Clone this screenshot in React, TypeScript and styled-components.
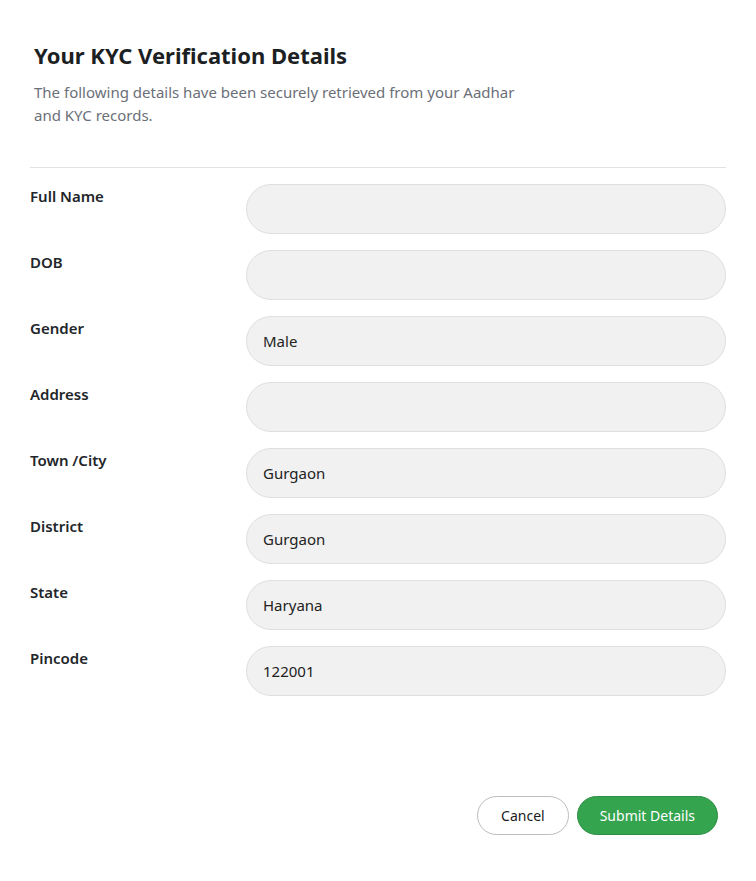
import React from 'react';
import styled, { createGlobalStyle } from 'styled-components';

const GlobalStyle = createGlobalStyle`
    body {
        margin: 0;
        background: #ffffff;
        font-family: "Noto Sans", "Open Sans", sans-serif;
        color: #1f2328;
    }
`;

const Page = styled.div`
    display: flex;
    flex-direction: column;
    padding: 40px 30px 0;
`;

// <HEADER>
const Header = styled.div`
    padding: 0 4px 40px;
    border-bottom: 1px solid #e2e2e2;
`;

const Title = styled.h1`
    margin: 0 0 11px;
    font-size: 22px;
    line-height: 30px;
    font-weight: 700;
    color: #1c1f23;
`;

const Subtitle = styled.p`
    margin: 0;
    width: 490px;
    font-size: 15px;
    line-height: 23px;
    color: #6b7078;
`;
// </HEADER>

// <FIELDS>
const Fields = styled.div`
    display: flex;
    flex-direction: column;
    gap: 16px;
    padding-top: 16px;
`;

const Row = styled.div`
    display: grid;
    grid-template-columns: 216px 480px;
    align-items: start;
`;

const Label = styled.label`
    padding-top: 2px;
    font-size: 15px;
    line-height: 20px;
    font-weight: 600;
    color: #22262a;
`;

const Field = styled.input`
    box-sizing: border-box;
    width: 480px;
    height: 50px;
    padding: 0 16px;
    border: 1px solid #dedfe2;
    border-radius: 25px;
    background: #f1f1f1;
    font-family: inherit;
    font-size: 15px;
    color: #222;
    outline: none;
`;
// </FIELDS>

const Consent = styled.div`
    height: 100px;
`;

// <FOOTER>
const Footer = styled.div`
    display: flex;
    justify-content: flex-end;
    gap: 8px;
    padding-right: 8px;
`;

const Button = styled.button<{ $primary?: boolean }>`
    height: 39px;
    padding: 0 ${({ $primary }) => ($primary ? '22px' : '23px')};
    border-radius: 20px;
    border: 1px solid ${({ $primary }) => ($primary ? '#2e8e45' : '#bdbdbd')};
    background: ${({ $primary }) => ($primary ? '#34a44f' : '#ffffff')};
    color: ${({ $primary }) => ($primary ? '#ffffff' : '#1b1b1b')};
    font-family: inherit;
    font-size: 14px;
    cursor: pointer;
`;
// </FOOTER>

const fields = [
    { label: 'Full Name', value: '' },
    { label: 'DOB', value: '' },
    { label: 'Gender', value: 'Male' },
    { label: 'Address', value: '' },
    { label: 'Town /City', value: 'Gurgaon' },
    { label: 'District', value: 'Gurgaon' },
    { label: 'State', value: 'Haryana' },
    { label: 'Pincode', value: '122001' },
];

export default function App() {
    return (
        <>
            <GlobalStyle />
            <Page>
                <Header>
                    <Title>Your KYC Verification Details</Title>
                    <Subtitle>
                        The following details have been securely retrieved from your Aadhar and KYC records.
                    </Subtitle>
                </Header>
                <Fields>
                    {fields.map((f) => (
                        <Row key={f.label}>
                            <Label>{f.label}</Label>
                            <Field readOnly value={f.value} />
                        </Row>
                    ))}
                </Fields>
                <Consent />
                <Footer>
                    <Button>Cancel</Button>
                    <Button $primary>Submit Details</Button>
                </Footer>
            </Page>
        </>
    );
}
